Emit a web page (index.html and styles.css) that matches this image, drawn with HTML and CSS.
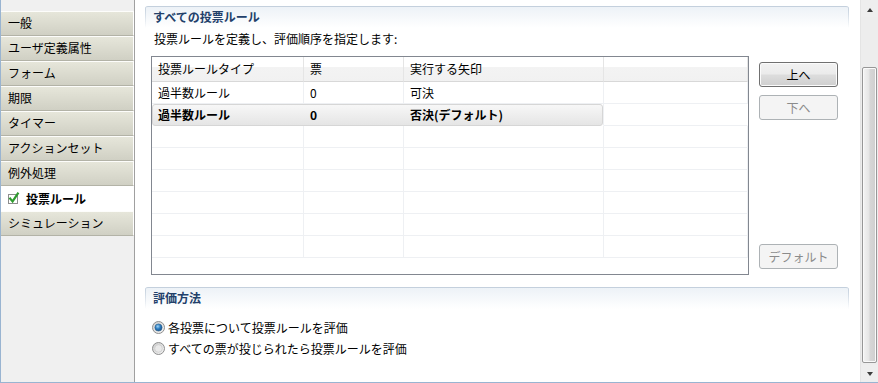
FILE: index.html
```html
<!DOCTYPE html>
<html lang="ja">
<head>
<meta charset="utf-8">
<title>投票ルール</title>
<link rel="stylesheet" href="styles.css">
</head>
<body>
<div class="window">
  <nav class="sidebar">
    <div class="tab">一般</div>
    <div class="tab">ユーザ定義属性</div>
    <div class="tab">フォーム</div>
    <div class="tab">期限</div>
    <div class="tab">タイマー</div>
    <div class="tab">アクションセット</div>
    <div class="tab">例外処理</div>
    <div class="tab active">
      <svg class="chk" width="13" height="14" viewBox="0 0 13 14">
        <rect x="1.5" y="3.5" width="9" height="9" fill="#fff" stroke="#8d8d8d"/>
        <path d="M3.2 7.6 L5.6 10.4 L10.8 2.6" fill="none" stroke="#2e9b2e" stroke-width="2.2" stroke-linecap="square"/>
      </svg>
      <span>投票ルール</span>
    </div>
    <div class="tab">シミュレーション</div>
  </nav>

  <main class="main">
    <section class="section">
      <div class="sec-head">すべての投票ルール</div>
      <p class="desc">投票ルールを定義し、評価順序を指定します:</p>
      <div class="rules">
        <div class="table">
          <div class="row head">
            <div class="cell">投票ルールタイプ</div>
            <div class="cell">票</div>
            <div class="cell">実行する矢印</div>
            <div class="cell"></div>
          </div>
          <div class="row">
            <div class="cell">過半数ルール</div>
            <div class="cell">0</div>
            <div class="cell">可決</div>
            <div class="cell"></div>
          </div>
          <div class="row sel">
            <div class="hl"></div>
            <div class="cell c1">過半数ルール</div>
            <div class="cell c2">0</div>
            <div class="cell c3">否決(デフォルト)</div>
            <div class="cell c4"></div>
          </div>
          <div class="row"><div class="cell"></div><div class="cell"></div><div class="cell"></div><div class="cell"></div></div>
          <div class="row"><div class="cell"></div><div class="cell"></div><div class="cell"></div><div class="cell"></div></div>
          <div class="row"><div class="cell"></div><div class="cell"></div><div class="cell"></div><div class="cell"></div></div>
          <div class="row"><div class="cell"></div><div class="cell"></div><div class="cell"></div><div class="cell"></div></div>
          <div class="row"><div class="cell"></div><div class="cell"></div><div class="cell"></div><div class="cell"></div></div>
          <div class="row"><div class="cell"></div><div class="cell"></div><div class="cell"></div><div class="cell"></div></div>
        </div>
        <div class="buttons">
          <button class="btn">上へ</button>
          <button class="btn" disabled>下へ</button>
          <button class="btn push" disabled>デフォルト</button>
        </div>
      </div>
    </section>

    <section class="section eval">
      <div class="sec-head">評価方法</div>
      <div class="radios">
        <label class="radio-row">
          <svg class="radio" width="13" height="13" viewBox="0 0 13 13">
            <defs>
              <linearGradient id="rg" x1="0" y1="0" x2="1" y2="1">
                <stop offset="0" stop-color="#cfcfcf"/>
                <stop offset="1" stop-color="#f6f6f6"/>
              </linearGradient>
              <radialGradient id="dot" cx="0.4" cy="0.35" r="0.7">
                <stop offset="0" stop-color="#9fd4f6"/>
                <stop offset="0.5" stop-color="#2b7cc0"/>
                <stop offset="1" stop-color="#1b4f85"/>
              </radialGradient>
            </defs>
            <circle cx="6.5" cy="6.5" r="6" fill="url(#rg)" stroke="#8e8f8f"/>
            <circle cx="6.5" cy="6.5" r="3.6" fill="url(#dot)" stroke="#2c5f8c" stroke-width="0.6"/>
          </svg>
          <span>各投票について投票ルールを評価</span>
        </label>
        <label class="radio-row">
          <svg class="radio" width="13" height="13" viewBox="0 0 13 13">
            <defs>
              <linearGradient id="rg2" x1="0" y1="0" x2="1" y2="1">
                <stop offset="0" stop-color="#cbcbcb"/>
                <stop offset="1" stop-color="#f7f7f7"/>
              </linearGradient>
            </defs>
            <circle cx="6.5" cy="6.5" r="6" fill="url(#rg2)" stroke="#8e8f8f"/>
            <circle cx="6.5" cy="6.5" r="3.8" fill="#e9e9e9" stroke="#c4c4c4" stroke-width="0.6"/>
          </svg>
          <span>すべての票が投じられたら投票ルールを評価</span>
        </label>
      </div>
    </section>
  </main>

  <div class="scrollbar">
    <div class="sb-btn"><span class="tri up"></span></div>
    <div class="track"><div class="thumb"></div></div>
    <div class="sb-btn"><span class="tri down"></span></div>
  </div>
</div>
</body>
</html>
```

FILE: styles.css
```css
* { box-sizing: border-box; }

body {
  margin: 0;
  font-family: "Noto Sans CJK JP", "Noto Sans", sans-serif;
  font-size: 12px;
  color: #000;
  background: #fff;
}

.window {
  display: flex;
  width: 878px;
  height: 383px;
  border-left: 1px solid #99b4d1;
  border-bottom: 1px solid #99b4d1;
  background: #fff;
  overflow: hidden;
}

/* ---------- sidebar ---------- */
.sidebar {
  width: 134px;
  flex: none;
  background: #f0f0f0;
  border-right: 1px solid #a0a0a0;
  padding-top: 11px;
}

.tab {
  height: 25px;
  border-top: 1px solid #fdfdfb;
  border-bottom: 1px solid #b3b3a7;
  border-right: 1px solid #fff;
  background: linear-gradient(#e6e6da, #d0d0c4);
  line-height: 22px;
  padding-left: 7px;
  white-space: nowrap;
}

.tab.active {
  display: flex;
  align-items: center;
  gap: 6px;
  background: #fff;
  border-top-color: #fff;
  border-bottom-color: #fff;
  font-weight: bold;
  padding-left: 6px;
}

.chk { flex: none; margin-top: -2px; }

/* ---------- main ---------- */
.main {
  width: 725px;
  flex: none;
  padding: 6px 11px 0 10px;
}

.sec-head {
  height: 22px;
  border-top: 1px solid #c4d0dd;
  border-radius: 3px 3px 0 0;
  padding-left: 8px;
  line-height: 20px;
  font-weight: bold;
  color: #22406a;
  background:
    linear-gradient(#c4d0dd, rgba(196, 208, 221, 0)) left top / 1px 100% no-repeat,
    linear-gradient(#c4d0dd, rgba(196, 208, 221, 0)) right top / 1px 100% no-repeat,
    linear-gradient(#edf2f7, #ffffff);
}

.desc {
  margin: 3px 0 0 9px;
  line-height: 16px;
}

.rules {
  display: flex;
  gap: 10px;
  padding: 0 11px 0 6px;
  margin-top: 9px;
}

.table {
  width: 598px;
  height: 219px;
  border: 1px solid #828790;
  overflow: hidden;
  flex: none;
}

.row {
  display: grid;
  grid-template-columns: 152px 100px 200px 1fr;
  grid-template-rows: 22px;
  height: 22px;
}

.cell {
  border-right: 1px solid #eef0f3;
  border-bottom: 1px solid #eef0f3;
  padding-left: 6px;
  line-height: 21px;
  white-space: nowrap;
  overflow: hidden;
}

.row.head {
  grid-template-rows: 25px;
  height: 25px;
  background: linear-gradient(#ffffff 0%, #ffffff 38%, #f3f3f3 39%, #f1f1f1 100%);
}

.row.head .cell {
  border-right-color: #e5e5e5;
  border-bottom-color: #d8d8d8;
  line-height: 23px;
}

.row.sel .hl {
  grid-column: 1 / 4;
  grid-row: 1;
  margin-right: 1px;
  border: 1px solid #d6d6d6;
  border-radius: 3px;
  background: linear-gradient(#f7f7f7, #e5e5e5);
}

.row.sel .cell {
  grid-row: 1;
  font-weight: bold;
  border-bottom-color: transparent;
  border-right-color: transparent;
}

.row.sel .c1 { grid-column: 1; }
.row.sel .c2 { grid-column: 2; }
.row.sel .c3 { grid-column: 3; border-right-color: #eef0f3; }
.row.sel .c4 { grid-column: 4; border-bottom-color: #eef0f3; }

/* ---------- buttons ---------- */
.buttons {
  width: 79px;
  flex: none;
  display: flex;
  flex-direction: column;
  gap: 8px;
  padding: 6px 0;
}

.btn {
  height: 25px;
  font-family: inherit;
  font-size: 12px;
  color: #000;
  border: 1px solid #707070;
  border-radius: 3px;
  background: linear-gradient(#f2f2f2 0%, #ebebeb 48%, #dddddd 52%, #cfcfcf 100%);
  box-shadow: inset 0 0 0 1px #fbfbfb;
  padding: 0;
}

.btn:disabled {
  color: #8b8b8b;
  border-color: #adb2b5;
  background: #f4f4f4;
  box-shadow: none;
}

.btn.push { margin-top: auto; }

/* ---------- evaluation ---------- */
.section.eval { margin-top: 12px; }

.radios {
  margin-top: 8px;
  padding-left: 7px;
}

.radio-row {
  display: flex;
  align-items: center;
  gap: 3px;
  height: 21px;
  white-space: nowrap;
}

.radio { flex: none; }

/* ---------- scrollbar ---------- */
.scrollbar {
  width: 18px;
  flex: none;
  border-left: 1px solid #e4e4e4;
  background: #eeeeee;
  display: flex;
  flex-direction: column;
}

.sb-btn {
  height: 17px;
  flex: none;
  display: flex;
  align-items: center;
  justify-content: center;
}

.track {
  flex: 1;
  padding: 50px 1px 0 1px;
  background: #ededed;
}

.thumb {
  height: 296px;
  border: 1px solid #979797;
  border-radius: 2px;
  background: linear-gradient(to right, #f4f4f4 0%, #e6e6e6 45%, #d6d6d6 55%, #cfcfcf 100%);
  box-shadow: inset 0 0 0 1px #fafafa;
}

.tri {
  width: 0;
  height: 0;
  border-left: 3.5px solid transparent;
  border-right: 3.5px solid transparent;
}

.tri.up { border-bottom: 4px solid #3c3c3c; margin-top: 2px; }
.tri.down { border-top: 4px solid #3c3c3c; }
```
